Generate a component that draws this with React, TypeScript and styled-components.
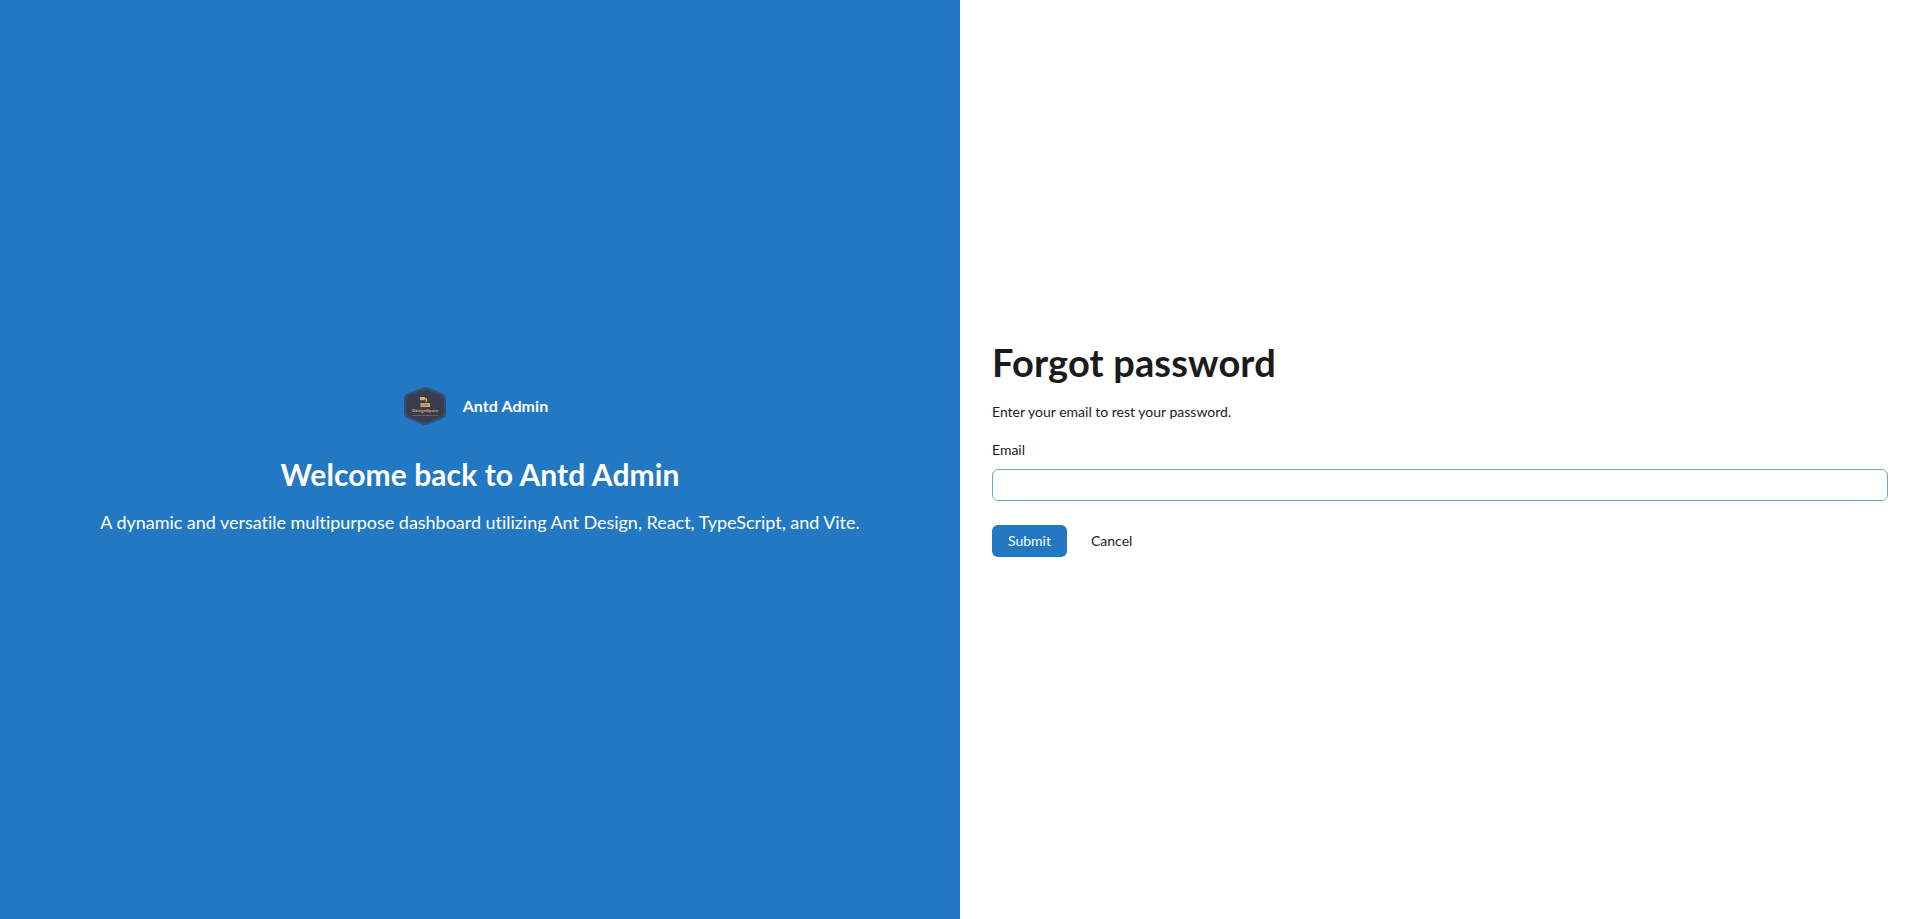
import React from 'react';
import styled, { createGlobalStyle } from 'styled-components';

const GlobalStyle = createGlobalStyle`
  *, *::before, *::after { box-sizing: border-box; }
  body {
    margin: 0;
    background: #fff;
    color: #1b1b1b;
    font: 400 14px/22px Lato, sans-serif;
    font-variant-ligatures: none;
  }
`;

const Page = styled.main`
  display: grid;
  grid-template-columns: 1fr 1fr;
  min-height: 100vh;
`;

const BrandPanel = styled.section`
  display: flex;
  flex-direction: column;
  align-items: center;
  justify-content: center;
  color: #fff;
  background: #2378c3;
  text-align: center;
`;

const Brand = styled.div`
  display: flex;
  align-items: center;
  margin-bottom: 25px;
`;

const LogoImage = styled.svg`
  width: 48px;
  height: 48px;
`;

const BrandName = styled.h5`
  margin: 0;
  padding: 4px 11px 4px 14px;
  font-size: 16px;
  font-weight: 700;
  line-height: 24px;
  letter-spacing: 0.08px;
`;

const WelcomeTitle = styled.h2`
  margin: 0 0 15px;
  font-size: 30px;
  font-weight: 700;
  line-height: 38px;
  letter-spacing: 0.08px;
`;

const Tagline = styled.p`
  margin: 0 0 1px;
  font-size: 18px;
  line-height: 28px;
  letter-spacing: -0.03px;
`;

const FormPanel = styled.section`
  display: flex;
  flex-direction: column;
  justify-content: center;
  padding: 0 32px;
`;

const Title = styled.h1`
  margin: 0;
  font-size: 38px;
  font-weight: 700;
  line-height: 46px;
  letter-spacing: 0.15px;
`;

const Hint = styled.p`
  margin: 16px 0;
`;

const Label = styled.label`
  display: block;
  margin-bottom: 8px;
`;

const Input = styled.input`
  display: block;
  width: 100%;
  height: 32px;
  padding: 4px 11px;
  border: 1px solid #6fa5d3;
  border-radius: 6px;
  background: #fff;
  font: inherit;
  outline: none;
`;

const Actions = styled.div`
  display: flex;
  gap: 8px;
  margin: 24px 0 23px;
`;

const Button = styled.button<{ $primary?: boolean }>`
  height: 32px;
  padding: 4px 15px;
  border: 1px solid transparent;
  border-radius: 6px;
  font: inherit;
  color: ${({ $primary }) => ($primary ? '#fff' : '#1b1b1b')};
  background: ${({ $primary }) => ($primary ? '#2378c3' : 'transparent')};
  background-clip: border-box;
  cursor: pointer;
`;

const Logo = () => (
  <LogoImage viewBox="0 0 48 48" role="img" aria-label="Design Sparx">
    <path
      d="M20.5 6 Q24 4.2 27.5 6 L41.5 11.6 Q45 13.2 45 17 V31 Q45 34.8 41.5 36.4 L27.5 42 Q24 43.8 20.5 42 L6.5 36.4 Q3 34.8 3 31 V17 Q3 13.2 6.5 11.6 Z"
      fill="#334d6b"
    />
    <path
      d="M21 7.5 Q24 6 27 7.5 L40.5 13 Q43.3 14.3 43.3 17.4 V30.6 Q43.3 33.7 40.5 35 L27 40.5 Q24 42 21 40.5 L7.5 35 Q4.7 33.7 4.7 30.6 V17.4 Q4.7 14.3 7.5 13 Z"
      fill="#383e50"
      stroke="#2d659c"
      strokeWidth="0.6"
    />
    <path d="M19 15h5v1.2h2v3.8h-1.2v-2.6h-1.5v.8H19z" fill="#e3aa72" />
    <path d="M19.5 21h9.5v4h-9.5z" fill="#dba26c" />
    <path d="M21.5 22v2M24.2 22v2M26.2 22v2" stroke="#6c5b59" strokeWidth="0.6" />
    <text x="24" y="29.6" textAnchor="middle" textLength="26" lengthAdjust="spacingAndGlyphs" fontFamily="Lato, sans-serif" fontSize="4.2" fontWeight="700" fill="#dfa46d">DesignSparx</text>
    <text x="24" y="33.8" textAnchor="middle" textLength="26" lengthAdjust="spacingAndGlyphs" fontFamily="Lato, sans-serif" fontSize="2.5" fill="#c3946b">Innovate Create Elevate</text>
  </LogoImage>
);

export default function App() {
  return (
    <>
      <GlobalStyle />
      <Page>
        <BrandPanel>
          <Brand>
            <Logo />
            <BrandName>Antd Admin</BrandName>
          </Brand>
          <WelcomeTitle>Welcome back to Antd Admin</WelcomeTitle>
          <Tagline>
            A dynamic and versatile multipurpose dashboard utilizing Ant Design, React, TypeScript, and Vite.
          </Tagline>
        </BrandPanel>
        <FormPanel>
          <Title>Forgot password</Title>
          <Hint>Enter your email to rest your password.</Hint>
          <form onSubmit={(event) => event.preventDefault()}>
            <Label htmlFor="email">Email</Label>
            <Input id="email" type="email" />
            <Actions>
              <Button $primary type="submit">Submit</Button>
              <Button type="button">Cancel</Button>
            </Actions>
          </form>
        </FormPanel>
      </Page>
    </>
  );
}
